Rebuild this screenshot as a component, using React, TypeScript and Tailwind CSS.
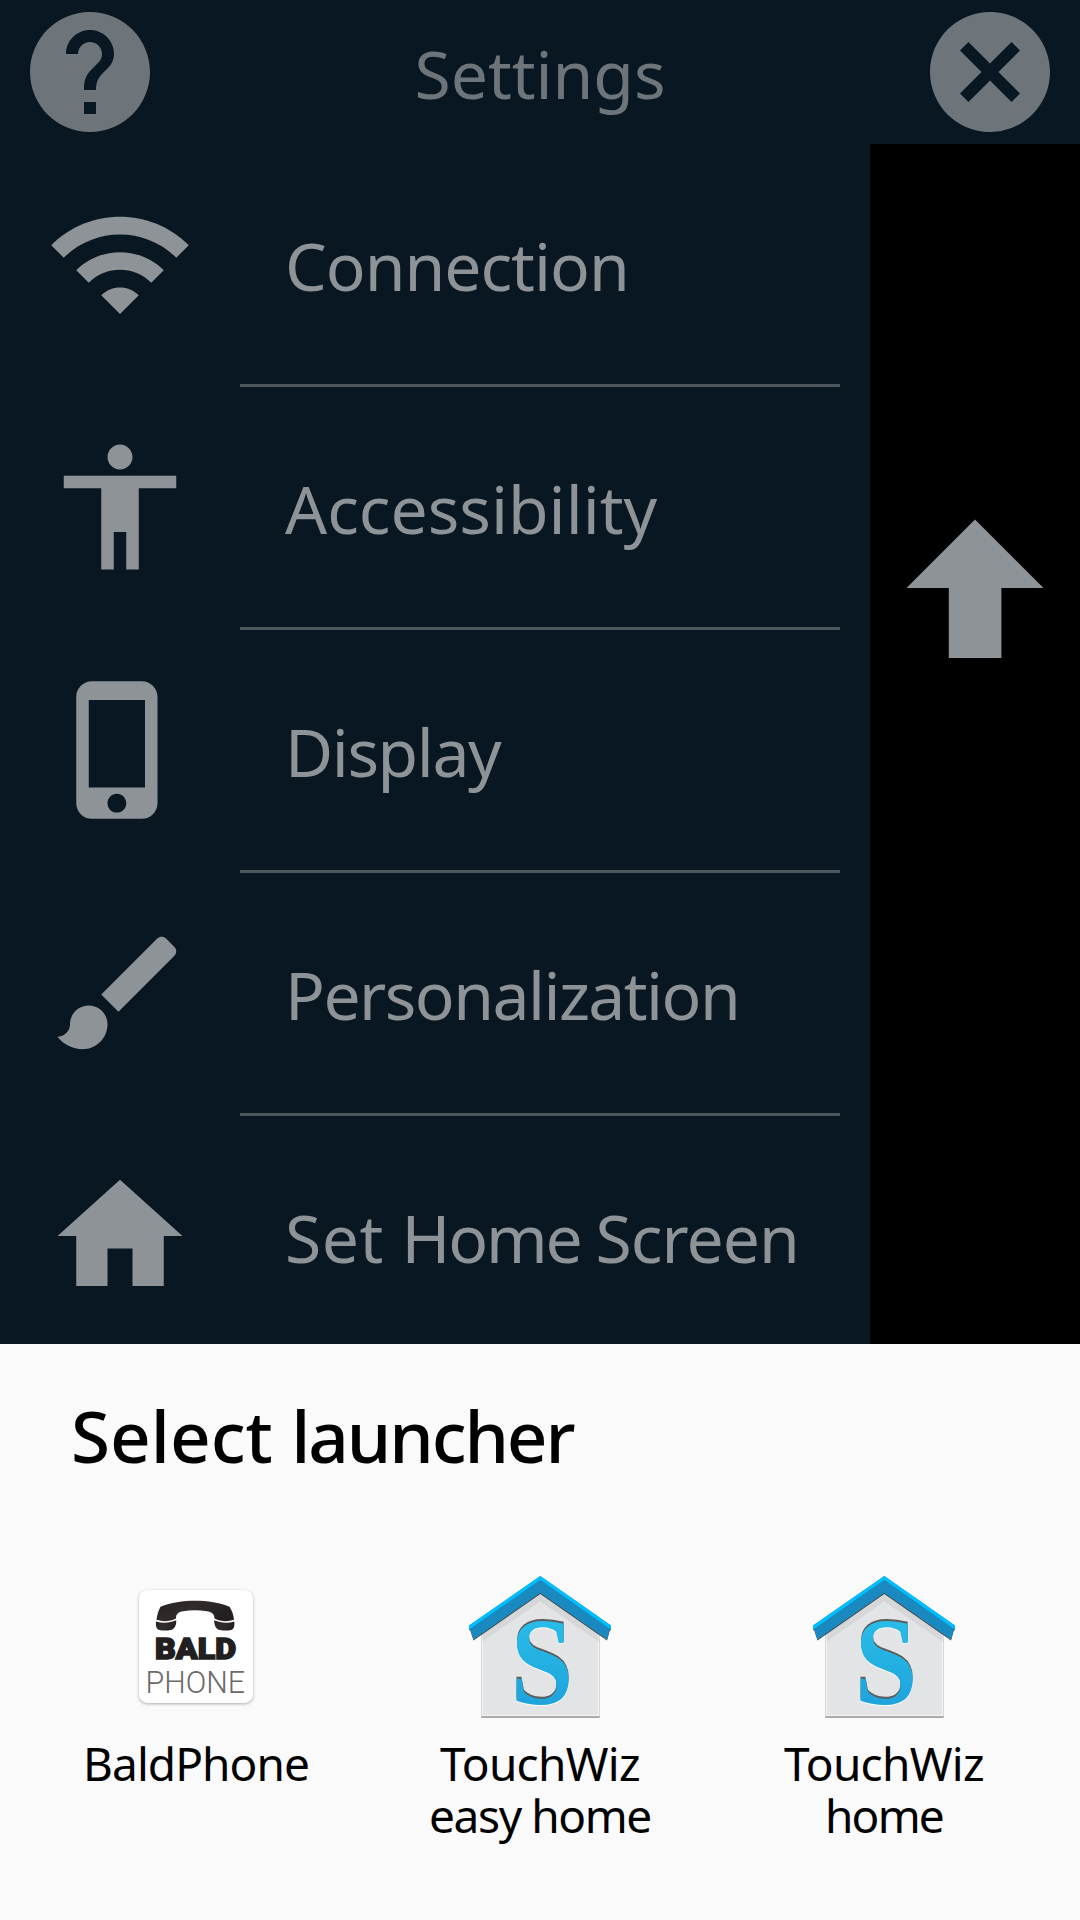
import React from "react";

type Word = [text: string, tracking: string];

const rows: { words: Word[]; path: string }[] = [
  {
    words: [["Connection", "tracking-[-1px]"]],
    path: "M1 9l2 2c4.97-4.97 13.03-4.97 18 0l2-2C16.93 2.93 7.08 2.93 1 9zm8 8l3 3 3-3c-1.65-1.66-4.34-1.66-6 0zm-4-4l2 2c2.76-2.76 7.24-2.76 10 0l2-2C15.14 9.14 8.87 9.14 5 13z",
  },
  {
    words: [["Accessibility", "tracking-[0px]"]],
    path: "M12 2c1.1 0 2 .9 2 2s-.9 2-2 2-2-.9-2-2 .9-2 2-2zm9 7h-6v13h-2v-6h-2v6H9V9H3V7h18v2z",
  },
  {
    words: [["Display", "tracking-[-1.4px]"]],
    path: "M15.5 1h-8C6.12 1 5 2.12 5 3.5v17C5 21.88 6.12 23 7.5 23h8c1.38 0 2.5-1.12 2.5-2.5v-17C18 2.12 16.88 1 15.5 1zm-4 21c-.83 0-1.5-.67-1.5-1.5s.67-1.5 1.5-1.5 1.5.67 1.5 1.5-.67 1.5-1.5 1.5zm4.5-4H7V4h9v14z",
  },
  {
    words: [["Personalization", "tracking-[-1.55px]"]],
    path: "M7 14c-1.66 0-3 1.34-3 3 0 1.31-1.16 2-2 2 .92 1.22 2.49 2 4 2 2.21 0 4-1.79 4-4 0-1.66-1.34-3-3-3zm13.71-9.37l-1.34-1.34c-.39-.39-1.02-.39-1.41 0L9 12.25 11.75 15l8.96-8.96c.39-.39.39-1.02 0-1.41z",
  },
  {
    words: [
      ["Set ", "tracking-[0.5px]"],
      ["Home ", "tracking-[-2.2px]"],
      ["Screen", "tracking-[-0.95px]"],
    ],
    path: "M10 20v-6h4v6h5v-8h3L12 3 2 12h3v8z",
  },
];

const HELP =
  "M12 2C6.48 2 2 6.48 2 12s4.48 10 10 10 10-4.48 10-10S17.52 2 12 2zm1 17h-2v-2h2v2zm2.07-7.75l-.9.92C13.45 12.9 13 13.5 13 15h-2v-.5c0-1.1.45-2.1 1.17-2.83l1.24-1.26c.37-.36.59-.86.59-1.41 0-1.1-.9-2-2-2s-2 .9-2 2H8c0-2.21 1.79-4 4-4s4 1.79 4 4c0 .88-.36 1.68-.93 2.25z";
const CLOSE =
  "M12 2C6.47 2 2 6.47 2 12s4.47 10 10 10 10-4.47 10-10S17.53 2 12 2zm5 13.59L15.59 17 12 13.41 8.41 17 7 15.59 10.59 12 7 8.41 8.41 7 12 10.59 15.59 7 17 8.41 13.41 12 17 15.59z";

function Glyph({ d, className }: { d: string; className: string }) {
  return (
    <svg viewBox="0 0 24 24" className={className} fill="currentColor" aria-hidden="true">
      <path d={d} />
    </svg>
  );
}

function BaldPhoneIcon() {
  return (
    <svg viewBox="-14 -15 160 160" className="size-[160px]">
      <defs>
        <linearGradient id="handset" x1="0" y1="0" x2="1" y2="0.4">
          <stop offset="0" stopColor="#231f20" />
          <stop offset="0.5" stopColor="#332c2d" />
          <stop offset="1" stopColor="#231f20" />
        </linearGradient>
      </defs>
      <rect
        x="9"
        y="5"
        width="114"
        height="113"
        rx="8.5"
        fill="#ffffff"
        className="[filter:drop-shadow(0_1.5px_1.5px_rgba(0,0,0,0.32))]"
      />
      <g fill="url(#handset)">
        <path d="M26.5 34.8 C27 30 28.5 25.5 30.5 21.8 C41 17.5 53 15.8 65 15.8 S90 17.5 99.5 21.8 C102 25.5 103.6 30 104 34.8 C97.5 37 90.5 36.6 84.5 33.5 C84.5 28.5 81 27.2 77 26.3 C69 25 61 25 53 26.3 C49 27.2 46 28.5 46 33.5 C40 36.6 33 37 26.5 34.8 Z" />
        <path d="M26 36.4 C32.5 38.5 40 38 46.2 35.2 C46.6 40 44.5 44.5 40.5 45 C37 45.8 32.5 45.8 29.5 45 C26.5 44 25.5 41 26 36.4 Z" />
        <path d="M104.3 36.4 C97.8 38.5 90.5 38 84.3 35.2 C84 40 86 44.5 90 45 C93.5 45.8 98 45.8 101 45 C104 44 104.8 41 104.3 36.4 Z" />
      </g>
      <text
        x="25"
        y="74.3"
        textLength="81"
        lengthAdjust="spacingAndGlyphs"
        className="font-['Roboto',sans-serif] text-[30px] font-black"
        fill="#231f20"
        stroke="#231f20"
        strokeWidth="1.6"
      >
        BALD
      </text>
      <text
        x="15.5"
        y="107.5"
        textLength="99.5"
        lengthAdjust="spacingAndGlyphs"
        className="font-['Roboto',sans-serif] text-[31.5px] font-light"
        fill="#6a6a6a"
      >
        PHONE
      </text>
    </svg>
  );
}

function TouchWizIcon({ id }: { id: string }) {
  return (
    <svg viewBox="0 0 160 160" className="size-[160px]">
      <defs>
        <linearGradient id={id} x1="0" y1="0" x2="0" y2="1">
          <stop offset="0" stopColor="#2cc4ec" />
          <stop offset="1" stopColor="#1b9cd8" />
        </linearGradient>
      </defs>
      <path
        d="M22 62 L80.3 22 L139 62 V146 H22 Z"
        fill="#e2e4e6"
        stroke="#ffffff"
        strokeWidth="1.2"
        className="[filter:drop-shadow(0_1px_0.7px_rgba(0,0,0,0.65))]"
      />
      <path d="M22.6 63 L80.3 23 L138.4 63 V71.5 L80.3 31.5 L22.6 71.5 Z" fill="#d6d7d9" />
      <g className="[filter:drop-shadow(0_1px_0.6px_rgba(0,0,0,0.7))]">
        <path d="M80.3 6 L151 55.5 L147 69.5 L80.3 23 L13.5 69.5 L9 55.5 Z" fill="#1989bf" />
        <path d="M80.3 6 L151 55.5 V59.5 L80.3 9.8 L9 59.5 V55.5 Z" fill="#00bfff" />
      </g>
      <text
        x="50.5"
        y="133.6"
        textLength="63"
        lengthAdjust="spacingAndGlyphs"
        fill={`url(#${id})`}
        className="font-['Liberation_Serif',serif] text-[124px] font-bold [filter:drop-shadow(0_-1.2px_0_#5c5c5c)_drop-shadow(0_1.6px_0_#ffffff)]"
      >
        S
      </text>
    </svg>
  );
}

function Launcher({ icon, lines }: { icon: React.ReactNode; lines: Word[] }) {
  return (
    <button className="flex flex-col items-center">
      {icon}
      <span className="mt-[7px] flex flex-col items-center text-[46px] leading-[52px]">
        {lines.map(([text, tracking]) => (
          <span key={text} className={tracking}>
            {text}
          </span>
        ))}
      </span>
    </button>
  );
}

export default function App() {
  return (
    <div className="flex h-[1920px] w-[1080px] flex-col overflow-hidden bg-[#081721] font-['Noto_Sans',sans-serif]">
      <header className="flex h-36 shrink-0 items-center justify-between px-[18px] text-[#6d747a]">
        <button aria-label="Help">
          <Glyph d={HELP} className="block size-36" />
        </button>
        <h1 className="pt-[2px] text-[66px] leading-[90px]">Settings</h1>
        <button aria-label="Close">
          <Glyph d={CLOSE} className="block size-36" />
        </button>
      </header>

      <main className="flex h-[1200px] shrink-0 overflow-hidden text-[#8e9397]">
        <ul className="w-[870px]">
          {rows.map((row, i) => (
            <li key={row.path}>
              <div className="flex h-[240px] items-center">
                <div className="flex w-[240px] justify-center">
                  <Glyph d={row.path} className="size-[150px]" />
                </div>
                <span className="ml-[45px] pt-[2px] text-[66px] leading-[90px] whitespace-pre">
                  {row.words.map(([text, tracking]) => (
                    <span key={text} className={tracking}>
                      {text}
                    </span>
                  ))}
                </span>
              </div>
              {i < rows.length - 1 && <div className="mr-[30px] ml-[240px] h-[3px] bg-[#4c575e]" />}
            </li>
          ))}
        </ul>
        <aside className="flex w-[210px] justify-center bg-black">
          <svg viewBox="0 0 138 139" className="mt-[375px] h-[139px] w-[138px]" fill="currentColor">
            <path d="M69 .5 L137.5 69 H95.4 V139 H42.8 V69 H.5 Z" />
          </svg>
        </aside>
      </main>

      <section className="flex-1 bg-[#fafafa] pt-[50px] text-black">
        <h2 className="ml-[71px] text-[71px] leading-[84px] font-medium whitespace-pre">
          <span className="tracking-[0px]">Select </span>
          <span className="tracking-[-2.1px]">launcher</span>
        </h2>
        <div className="mt-[92px] grid grid-cols-3 items-start px-6">
          <Launcher icon={<BaldPhoneIcon />} lines={[["BaldPhone", "tracking-[-0.95px]"]]} />
          <Launcher
            icon={<TouchWizIcon id="s-easy" />}
            lines={[
              ["TouchWiz", "tracking-[-0.7px]"],
              ["easy home", "tracking-[-1.4px]"],
            ]}
          />
          <Launcher
            icon={<TouchWizIcon id="s-home" />}
            lines={[
              ["TouchWiz", "tracking-[-0.7px]"],
              ["home", "tracking-[-1.8px]"],
            ]}
          />
        </div>
      </section>
    </div>
  );
}
